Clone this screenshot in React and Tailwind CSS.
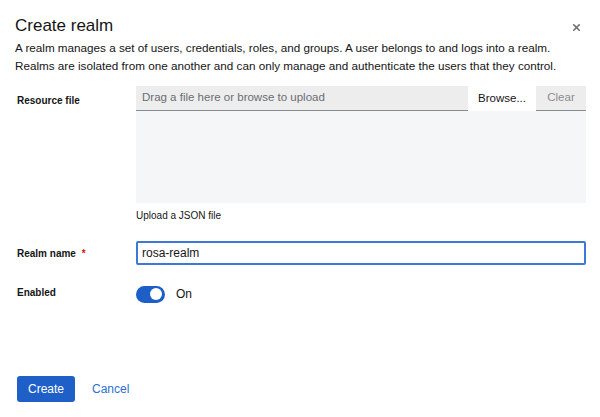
import { X } from 'lucide-react';

export default function App() {
  return (
    <div className="w-[600px] h-[417px] bg-white text-[#151515] font-['Liberation_Sans',sans-serif] overflow-hidden relative">
      {/* Header */}
      <div className="pl-[15px] pr-[18px] pt-[15px]">
        <div className="flex items-center justify-between">
          <h1 className="text-[17px] leading-[22px] font-normal">Create realm</h1>
          <X className="w-[11px] h-[11px] text-[#6a6e73] mt-[2px]" strokeWidth={3.5} />
        </div>
        <p className="mt-[2px] text-[11.7px] leading-[18px] text-[#151515]">
          A realm manages a set of users, credentials, roles, and groups. A user belongs to and logs into a realm.
          <br />
          Realms are isolated from one another and can only manage and authenticate the users that they control.
        </p>
      </div>

      {/* Form */}
      <div className="pl-[17px] pr-[14px] mt-[11px]">
        {/* Resource file */}
        <div className="flex">
          <label className="w-[119px] text-[10px] font-bold pt-[7px]">Resource file</label>
          <div className="flex-1">
            <div className="flex h-[25px] bg-[#ededed] border-b border-[#8a8d90]">
              <div className="flex-1 flex items-center px-[6px] text-[11.5px] text-[#6a6e73]">Drag a file here or browse to upload</div>
              <button className="w-[68px] bg-white text-[11.5px] text-[#151515] mb-[-1px]">Browse...</button>
              <button className="w-[50px] text-[11.5px] text-[#8a8d90]">Clear</button>
            </div>
            <div className="h-[92px] bg-[#f5f6f7]" />
            <div className="mt-[6px] text-[10px] leading-[14px] text-[#151515]">Upload a JSON file</div>
          </div>
        </div>

        {/* Realm name */}
        <div className="flex items-center mt-[18px]">
          <label className="w-[119px] text-[10px] font-bold">
            Realm name <span className="text-[#c9190b] ml-[3px]">*</span>
          </label>
          <div className="flex-1 h-[24px] border-2 border-[#3b78d8] rounded-[2px] flex items-center px-[4px] text-[12px]">
            rosa-realm
          </div>
        </div>

        {/* Enabled */}
        <div className="flex items-center mt-[20px]">
          <label className="w-[119px] text-[10px] font-bold mt-[-3px]">Enabled</label>
          <div className="flex items-center">
            <div className="w-[29px] h-[17px] rounded-full bg-[#1d5ec7] flex items-center justify-end pr-[3px]">
              <div className="w-[12px] h-[12px] rounded-full bg-white" />
            </div>
            <span className="ml-[11px] text-[12px]">On</span>
          </div>
        </div>
      </div>

      {/* Footer */}
      <div className="absolute left-[17px] top-[376px] flex items-center">
        <button className="w-[58px] h-[26px] bg-[#1e5fc8] text-white text-[12px] rounded-[3px]">Create</button>
        <button className="ml-[17px] text-[12px] text-[#2b6fd4]">Cancel</button>
      </div>
    </div>
  );
}
